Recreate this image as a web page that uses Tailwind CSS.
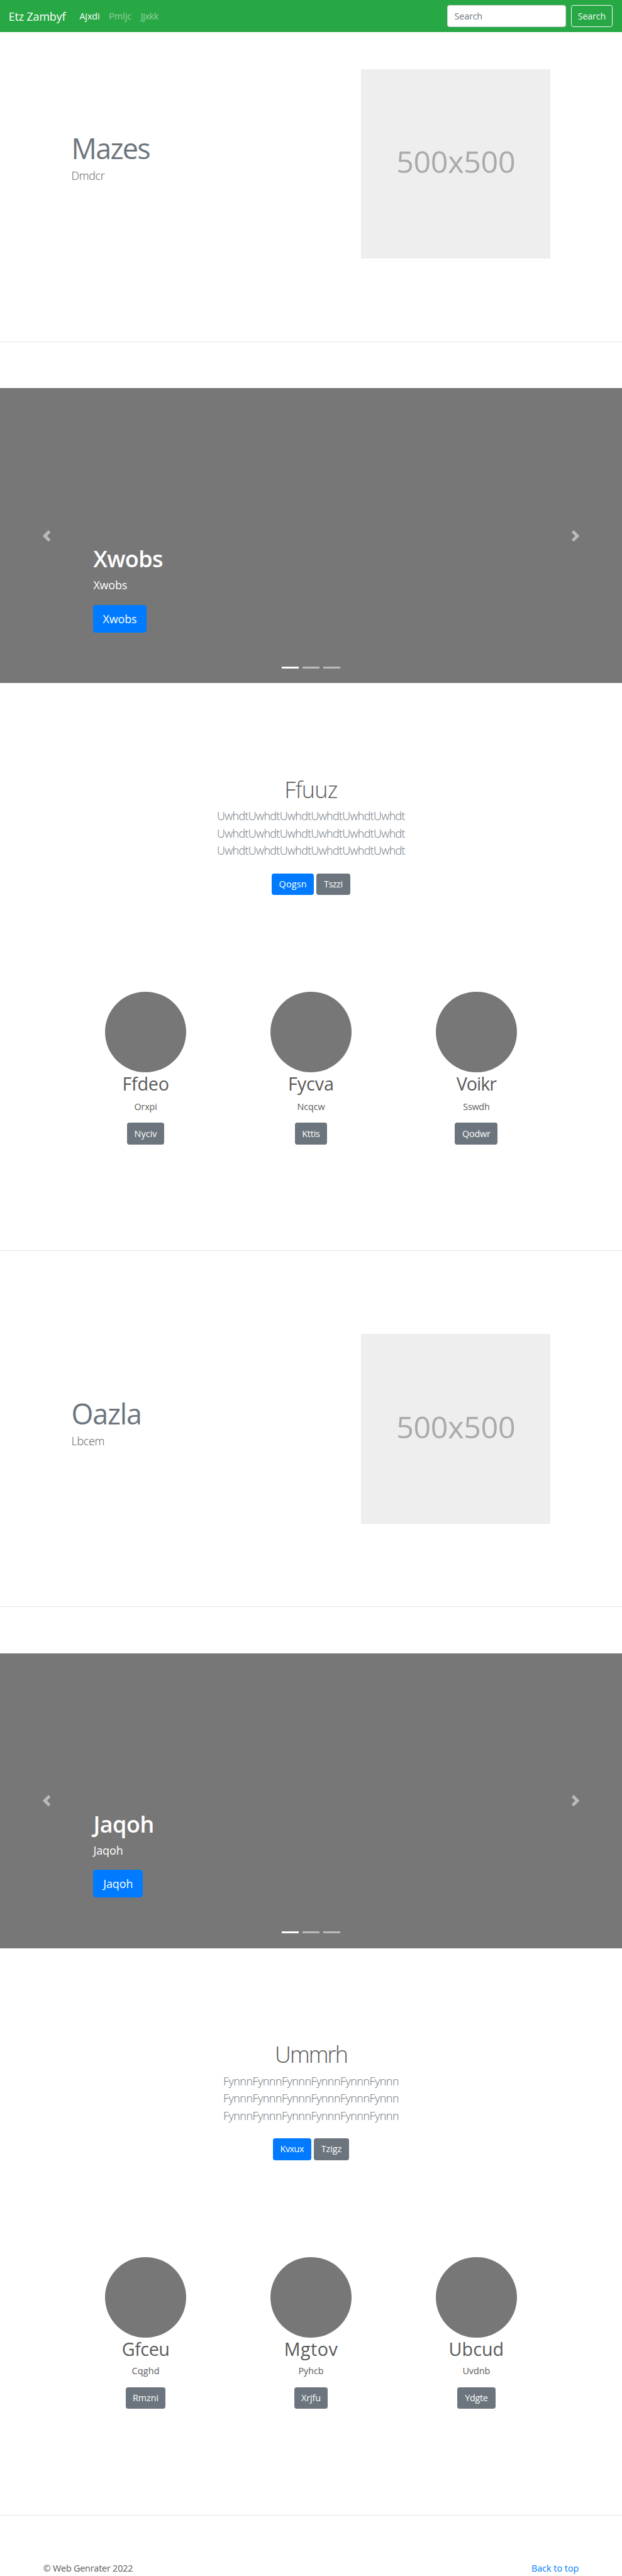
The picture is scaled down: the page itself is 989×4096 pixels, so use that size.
<!DOCTYPE html>
<html lang="en" class="text-[14.656px]">
<head>
<meta charset="utf-8">
<title>Etz Zambyf</title>
<script src="https://cdn.jsdelivr.net/npm/@tailwindcss/browser@4"></script>
</head>
<body class="bg-white font-['Open_Sans','Noto_Sans',sans-serif] text-[0.98rem] leading-6 text-[#5a5a5a] overflow-x-hidden">

<header class="flex h-14 items-center bg-[#28a745] pl-3.75 pr-4">
  <a class="w-28.75 text-[1.225rem] tracking-[-0.009em] text-white">Etz Zambyf</a>
  <nav class="flex flex-1">
    <a class="px-2 tracking-[-0.006em] text-white">Ajxdi</a>
    <a class="px-2 tracking-[-0.003em] text-white/50">Pmljc</a>
    <a class="px-2 tracking-[-0.027em] text-white/50">Jjxkk</a>
  </nav>
  <form class="flex gap-2">
    <input type="text" placeholder="Search" class="h-9.5 w-51.75 rounded border border-[#ced4da] bg-white px-3 tracking-[-0.012em] placeholder:text-[#6c757d]">
    <button type="button" class="h-9.5 w-18.25 rounded border border-[#f8f9fa] tracking-[-0.012em] text-[#f8f9fa]">Search</button>
  </form>
</header>

<main>
  <section class="flex h-134.5 justify-between border-b border-black/10 pt-16 pl-31 pr-31">
    <div class="pt-28">
      <h2 class="mb-1.75 text-[3.06rem] leading-[3.22rem] tracking-[-0.038em] text-[#6c757d]">Mazes</h2>
      <p class="text-[1.225rem] leading-7.5 font-light tracking-[-0.023em]">Dmdcr</p>
    </div>
    <div class="flex h-82.25 w-82.25 items-center justify-center bg-[#eee] pb-2.25 text-[3.3rem] leading-none tracking-[-0.006em] text-[#aaa]">500x500</div>
  </section>

  <section class="relative mt-20 h-128 bg-[#777] pt-68 pl-40.5 text-white">
    <h1 class="mb-1.75 text-[2.45rem] leading-[3.1rem] font-semibold tracking-[-0.016em]">Xwobs</h1>
    <p class="mb-[1.2rem] text-[1.225rem] leading-7 tracking-[-0.008em]">Xwobs</p>
    <a class="flex h-12 w-23 items-center justify-center rounded-[0.3rem] bg-[#007bff] text-[1.225rem] tracking-[-0.008em]">Xwobs</a>
    <svg class="absolute top-61.5 left-17.75 h-5 w-5 opacity-50" viewBox="0 0 8 8" fill="#fff"><path d="M5.25 0l-4 4 4 4 1.5-1.5L4.25 4l2.5-2.5L5.25 0z"/></svg>
    <svg class="absolute top-61.5 right-17.75 h-5 w-5 opacity-50" viewBox="0 0 8 8" fill="#fff"><path d="M2.75 0l-1.5 1.5L3.75 4l-2.5 2.5L2.75 8l4-4-4-4z"/></svg>
    <div class="absolute inset-x-0 bottom-6.5 flex justify-center gap-1.5">
      <span class="h-0.75 w-7.5 bg-white"></span>
      <span class="h-0.75 w-7.5 bg-white/50"></span>
      <span class="h-0.75 w-7.5 bg-white/50"></span>
    </div>
  </section>

  <section class="flex flex-col items-center pt-40 text-center">
    <h1 class="mb-1.5 text-[2.45rem] leading-12.5 font-light tracking-[-0.019em]">Ffuuz</h1>
    <p class="mb-6 text-[1.225rem] leading-7.5 font-light tracking-[-0.037em] text-[#6c757d]">UwhdtUwhdtUwhdtUwhdtUwhdtUwhdt<br>UwhdtUwhdtUwhdtUwhdtUwhdtUwhdt<br>UwhdtUwhdtUwhdtUwhdtUwhdtUwhdt</p>
    <div class="flex gap-1 text-white">
      <a class="flex h-9.5 w-18.25 items-center justify-center rounded bg-[#007bff] tracking-[0.014em]">Qogsn</a>
      <a class="flex h-9.5 w-14.75 items-center justify-center rounded bg-[#6c757d] tracking-[-0.03em]">Tszzi</a>
    </div>
  </section>

  <section class="mx-auto mt-42 grid w-215.25 grid-cols-3 pb-46 text-center">
    <div class="flex flex-col items-center">
      <div class="h-35 w-35 rounded-full bg-[#777]"></div>
      <h2 class="mb-2 text-[1.96rem] leading-9.75 tracking-[-0.009em]">Ffdeo</h2>
      <p class="mb-4 tracking-[-0.008em]">Orxpi</p>
      <a class="flex h-9.5 w-16.25 items-center justify-center rounded bg-[#6c757d] tracking-[0.004em] text-white">Nyciv</a>
    </div>
    <div class="flex flex-col items-center">
      <div class="h-35 w-35 rounded-full bg-[#777]"></div>
      <h2 class="mb-2 text-[1.96rem] leading-9.75 tracking-[-0.002em]">Fycva</h2>
      <p class="mb-4 tracking-[-0.01em]">Ncqcw</p>
      <a class="flex h-9.5 w-14 items-center justify-center rounded bg-[#6c757d] tracking-[-0.012em] text-white">Kttis</a>
    </div>
    <div class="flex flex-col items-center">
      <div class="h-35 w-35 rounded-full bg-[#777]"></div>
      <h2 class="mb-2 text-[1.96rem] leading-9.75 tracking-[-0.037em]">Voikr</h2>
      <p class="mb-4 tracking-[-0.018em]">Sswdh</p>
      <a class="flex h-9.5 w-18.5 items-center justify-center rounded bg-[#6c757d] tracking-[-0.014em] text-white">Qodwr</a>
    </div>
  </section>

  <section class="flex h-154.75 justify-between border-y border-black/10 pt-36 pl-31 pr-31">
    <div class="pt-28">
      <h2 class="mb-1.75 text-[3.06rem] leading-[3.22rem] tracking-[-0.026em] text-[#6c757d]">Oazla</h2>
      <p class="text-[1.225rem] leading-7.5 font-light tracking-[-0.018em]">Lbcem</p>
    </div>
    <div class="flex h-82.25 w-82.25 items-center justify-center bg-[#eee] pb-2.25 text-[3.3rem] leading-none tracking-[-0.006em] text-[#aaa]">500x500</div>
  </section>

  <section class="relative mt-20 h-128 bg-[#777] pt-68 pl-40.5 text-white">
    <h1 class="mb-1.75 text-[2.45rem] leading-[3.1rem] font-semibold tracking-[-0.012em]">Jaqoh</h1>
    <p class="mb-[1.2rem] text-[1.225rem] leading-7 tracking-[-0.004em]">Jaqoh</p>
    <a class="flex h-12 w-21.5 items-center justify-center rounded-[0.3rem] bg-[#007bff] text-[1.225rem] tracking-[-0.004em]">Jaqoh</a>
    <svg class="absolute top-61.5 left-17.75 h-5 w-5 opacity-50" viewBox="0 0 8 8" fill="#fff"><path d="M5.25 0l-4 4 4 4 1.5-1.5L4.25 4l2.5-2.5L5.25 0z"/></svg>
    <svg class="absolute top-61.5 right-17.75 h-5 w-5 opacity-50" viewBox="0 0 8 8" fill="#fff"><path d="M2.75 0l-1.5 1.5L3.75 4l-2.5 2.5L2.75 8l4-4-4-4z"/></svg>
    <div class="absolute inset-x-0 bottom-6.5 flex justify-center gap-1.5">
      <span class="h-0.75 w-7.5 bg-white"></span>
      <span class="h-0.75 w-7.5 bg-white/50"></span>
      <span class="h-0.75 w-7.5 bg-white/50"></span>
    </div>
  </section>

  <section class="flex flex-col items-center pt-40 text-center">
    <h1 class="mb-1.5 text-[2.45rem] leading-12.5 font-light tracking-[-0.053em]">Ummrh</h1>
    <p class="mb-6 text-[1.225rem] leading-7.5 font-light tracking-[-0.028em] text-[#6c757d]">FynnnFynnnFynnnFynnnFynnnFynnn<br>FynnnFynnnFynnnFynnnFynnnFynnn<br>FynnnFynnnFynnnFynnnFynnnFynnn</p>
    <div class="flex gap-1.25 text-white">
      <a class="flex h-9.5 w-16.5 items-center justify-center rounded bg-[#007bff] tracking-[-0.034em]">Kvxux</a>
      <a class="flex h-9.5 w-15.25 items-center justify-center rounded bg-[#6c757d] tracking-[-0.003em]">Tzigz</a>
    </div>
  </section>

  <section class="mx-auto mt-42 grid w-215.25 grid-cols-3 pb-46 text-center">
    <div class="flex flex-col items-center">
      <div class="h-35 w-35 rounded-full bg-[#777]"></div>
      <h2 class="mb-1.75 text-[1.96rem] leading-9.75 tracking-[-0.017em]">Gfceu</h2>
      <p class="mb-4 tracking-[0.013em]">Cqghd</p>
      <a class="flex h-9.5 w-17.25 items-center justify-center rounded bg-[#6c757d] tracking-[-0.003em] text-white">Rmzni</a>
    </div>
    <div class="flex flex-col items-center">
      <div class="h-35 w-35 rounded-full bg-[#777]"></div>
      <h2 class="mb-1.75 text-[1.96rem] leading-9.75 tracking-[0.017em]">Mgtov</h2>
      <p class="mb-4 tracking-[-0.007em]">Pyhcb</p>
      <a class="flex h-9.5 w-14.5 items-center justify-center rounded bg-[#6c757d] tracking-[-0.003em] text-white">Xrjfu</a>
    </div>
    <div class="flex flex-col items-center">
      <div class="h-35 w-35 rounded-full bg-[#777]"></div>
      <h2 class="mb-1.75 text-[1.96rem] leading-9.75 tracking-[0.001em]">Ubcud</h2>
      <p class="mb-4 tracking-[-0.001em]">Uvdnb</p>
      <a class="flex h-9.5 w-16.5 items-center justify-center rounded bg-[#6c757d] tracking-[-0.019em] text-white">Ydgte</a>
    </div>
  </section>
</main>

<footer class="flex justify-between border-t border-black/10 px-18.75 pt-20">
  <p class="tracking-[-0.014em]">© Web Genrater 2022</p>
  <a class="tracking-[-0.001em] text-[#007bff]">Back to top</a>
</footer>

</body>
</html>
